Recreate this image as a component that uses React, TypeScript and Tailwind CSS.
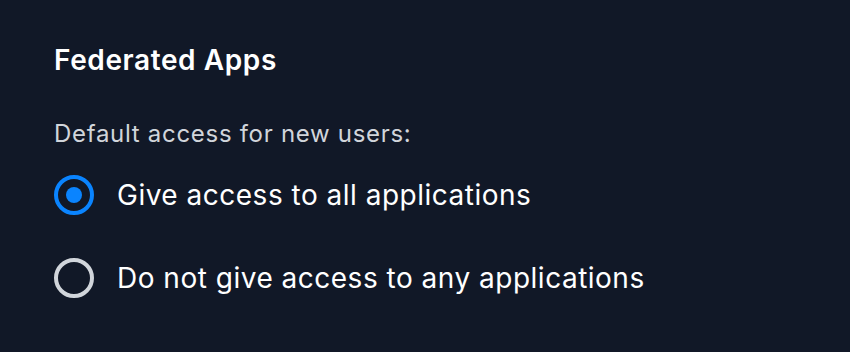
import React, { useState } from "react";

const options = [
  { id: "all", label: "Give access to all applications" },
  { id: "none", label: "Do not give access to any applications" },
];

export default function App() {
  const [value, setValue] = useState("all");
  return (
    <div
      className="w-[850px] h-[352px] bg-[#111827] text-white pl-[54px] pt-[40px]"
      style={{ fontFamily: "Inter, 'Noto Sans', sans-serif" }}
    >
      <h2 className="text-[28px] font-semibold leading-[40px] tracking-[0.6px]">Federated Apps</h2>
      <p className="mt-[38px] text-[24px] leading-[32px] text-[#d1d5db] tracking-[0.7px]">
        Default access for new users:
      </p>
      <div className="mt-[25px] flex flex-col gap-[43px]">
        {options.map((o) => {
          const checked = value === o.id;
          return (
            <label key={o.id} className="flex items-center gap-[23px] cursor-pointer" onClick={() => setValue(o.id)}>
              <span
                className={
                  checked
                    ? "w-[40px] h-[40px] rounded-full border-[4px] border-[#0a84ff] flex items-center justify-center"
                    : "w-[40px] h-[40px] rounded-full border-[4px] border-[#d1d5db] flex items-center justify-center"
                }
              >
                {checked && <span className="w-[16px] h-[16px] rounded-full bg-[#0a84ff]" />}
              </span>
              <span className="text-[28px] leading-[40px] tracking-[0.5px]">{o.label}</span>
            </label>
          );
        })}
      </div>
    </div>
  );
}
